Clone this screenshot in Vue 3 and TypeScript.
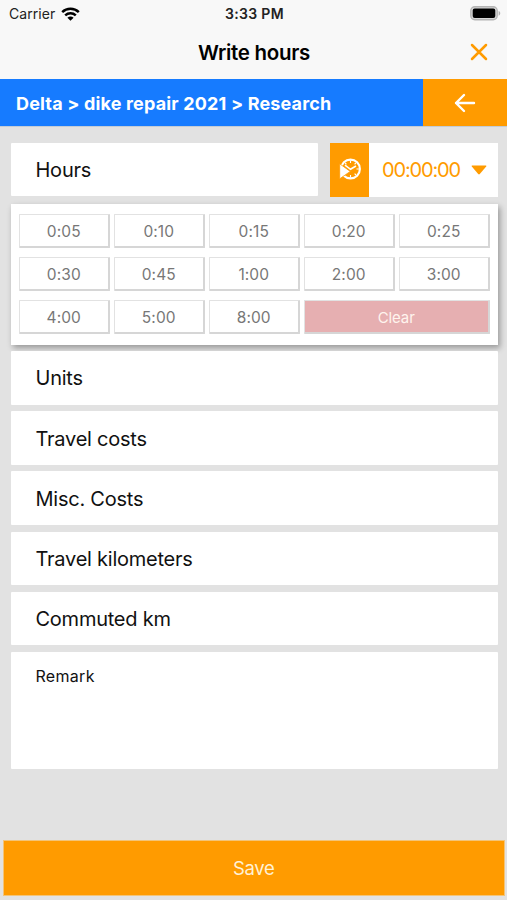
<script setup lang="ts">
import { ref } from 'vue'

const presets: string[] = [
  '0:05', '0:10', '0:15', '0:20', '0:25',
  '0:30', '0:45', '1:00', '2:00', '3:00',
  '4:00', '5:00', '8:00',
]
const sections: string[] = ['Units', 'Travel costs', 'Misc. Costs', 'Travel kilometers', 'Commuted km']
const time = ref('00:00:00')

function pick(value: string): void {
  time.value = `${value.padStart(5, '0')}:00`
}
function clear(): void {
  time.value = '00:00:00'
}
</script>

<template>
  <div class="screen">
    <header class="top">
      <div class="status">
        <div class="carrier">
          <span>Carrier</span>
          <svg class="wifi" viewBox="0 0 19 14" fill="none" stroke="#000" stroke-width="2.5">
            <path d="M1.2 5.1C5.8.7 13.2.7 17.8 5.1" />
            <path d="M4.2 8.3C7.2 5.5 11.8 5.5 14.8 8.3" />
            <path d="M9.5 13.8 6.4 10.7C8.1 9.2 10.9 9.2 12.6 10.7Z" fill="#000" stroke="none" />
          </svg>
        </div>
        <span class="clock">3:33 PM</span>
        <svg class="battery" viewBox="0 0 31 15">
          <rect x=".8" y=".8" width="26.4" height="13" rx="4" fill="#d8d8d8" stroke="#b4b4b4" stroke-width="1.4" />
          <rect x="2.7" y="2.5" width="22.6" height="9.6" rx="2" fill="#000" />
          <path d="M28.6 5c2.2.7 2.2 4 0 4.7Z" fill="#b0b0b0" />
        </svg>
      </div>
      <div class="title-row">
        <h1>Write hours</h1>
        <button class="close" aria-label="Close">
          <svg viewBox="0 0 18 18" fill="none" stroke="#ff9b00" stroke-width="2.5" stroke-linecap="round">
            <path d="M2 2 16 16M16 2 2 16" />
          </svg>
        </button>
      </div>
    </header>

    <nav class="crumbs">
      <span class="path">Delta &gt; dike repair 2021 &gt; Research</span>
      <button class="back" aria-label="Back">
        <svg viewBox="0 0 22 20" fill="none" stroke="#fff" stroke-width="2.4" stroke-linecap="round" stroke-linejoin="round">
          <path d="M20 10H2M10 2 2 10 10 18" />
        </svg>
      </button>
    </nav>

    <main class="body">
      <div class="hours">
        <div class="card hours-label">Hours</div>
        <div class="timer">
          <button class="start" aria-label="Start timer">
            <svg viewBox="0 0 24 24" fill="none" stroke="#fff">
              <circle cx="12.5" cy="11" r="9.4" stroke-width="2.1" />
              <path d="M12.5 2.5v2.6M12.5 17v2.4M4 11h2.5M18.5 11H21M7.2 4.8l1.2 1.5M17.8 4.8l-1.2 1.5M18 17l-1.4-1.4" stroke-width="1.1" />
              <path d="M7 7.2 12.5 11.3 18 8" stroke-width="1.6" />
              <path d="M1.7 5.8v15L12.3 13.4Z" fill="#fff" stroke="#ff9b00" stroke-width=".8" />
            </svg>
          </button>
          <span class="value">{{ time }}</span>
          <svg class="caret" viewBox="0 0 16 10"><path d="M1.2.5h13.6q1 0 .4.9L8.8 9.1q-.8.8-1.6 0L.8 1.4Q.2.5 1.2.5Z" fill="#ff9b00" /></svg>
        </div>
      </div>

      <div class="panel">
        <button v-for="p in presets" :key="p" class="preset" @click="pick(p)">{{ p }}</button>
        <button class="preset clear" @click="clear">Clear</button>
      </div>

      <div class="sections">
        <div v-for="s in sections" :key="s" class="card">{{ s }}</div>
        <div class="remark">Remark</div>
      </div>
    </main>

    <footer class="foot">
      <button class="save">Save</button>
    </footer>
  </div>
</template>

<style>
body {
  margin: 0;
  background: #e2e2e2;
}
</style>

<style scoped>
.screen {
  box-sizing: border-box;
  width: 507px;
  height: 900px;
  display: flex;
  flex-direction: column;
  overflow: hidden;
  background: #e2e2e2;
  color: #111;
  font-family: Inter, "Liberation Sans", sans-serif;
}
button {
  margin: 0;
  padding: 0;
  border: 0;
  background: none;
  font: inherit;
  color: inherit;
}
svg {
  display: block;
}
.top {
  height: 79px;
  flex: none;
  background: #f8f8f8;
}
.status {
  display: grid;
  grid-template-columns: 1fr auto 1fr;
  align-items: center;
  height: 27px;
  padding: 0 7px 0 9px;
  font-size: 14px;
  color: #222;
}
.carrier {
  display: flex;
  align-items: center;
  gap: 6px;
  letter-spacing: 0.05px;
}
.wifi {
  width: 19px;
  height: 14px;
}
.clock {
  font-weight: 600;
  font-size: 14px;
  letter-spacing: 0.3px;
}
.battery {
  width: 31px;
  height: 15px;
  justify-self: end;
  margin-right: -1px;
}
.title-row {
  display: grid;
  grid-template-columns: 1fr auto 1fr;
  align-items: center;
  height: 50px;
  padding: 0 19px 0 20px;
}
h1 {
  grid-column: 2;
  margin: 0;
  font-size: 20.5px;
  font-weight: 600;
  letter-spacing: -0.3px;
  color: #000;
}
.close {
  justify-self: end;
}
.close svg {
  width: 18px;
  height: 18px;
}
.crumbs {
  display: flex;
  flex: none;
  height: 48px;
  box-sizing: border-box;
  border-bottom: 1px solid #c3ccd6;
  background: #e2e2e2;
}
.path {
  flex: 1;
  display: flex;
  align-items: center;
  padding: 1px 0 0 16px;
  background: #167bff;
  color: #fff;
  font-size: 18px;
  font-weight: 650;
  letter-spacing: 0.16px;
  white-space: pre;
}
.back {
  width: 84.5px;
  display: flex;
  align-items: center;
  justify-content: center;
  background: #ff9b00;
}
.back svg {
  width: 22px;
  height: 20px;
}
.body {
  flex: 1;
  padding: 15.5px 9.5px 0 10.5px;
}
.hours {
  display: flex;
  gap: 12px;
  height: 54.5px;
}
.card {
  display: flex;
  align-items: center;
  box-sizing: border-box;
  height: 53.7px;
  padding: 1px 0 0 25px;
  background: #fff;
  border-radius: 1px;
  font-size: 20px;
  letter-spacing: -0.24px;
}
.hours-label {
  flex: 1;
  padding-top: 2px;
}
.timer {
  display: flex;
  align-items: center;
  width: 167.5px;
  background: #fff;
}
.start {
  width: 39px;
  height: 100%;
  display: flex;
  align-items: center;
  justify-content: center;
  background: #ff9b00;
}
.start svg {
  width: 24px;
  height: 24px;
}
.value {
  flex: 1;
  padding: 1px 0 0 13px;
  color: #ff9b00;
  font-size: 20px;
  letter-spacing: -1.15px;
}
.caret {
  width: 16px;
  height: 10px;
  margin-right: 10.5px;
}
.panel {
  position: relative;
  display: grid;
  grid-template-columns: repeat(5, 1fr);
  grid-auto-rows: 34px;
  gap: 9.2px 4.4px;
  height: 141px;
  box-sizing: border-box;
  margin-top: 7px;
  padding: 10px 8px 0 8.5px;
  background: #fff;
  box-shadow: 2px 3px 6px rgba(0, 0, 0, 0.33);
}
.preset {
  box-sizing: border-box;
  padding-top: 2px;
  border: 1px solid #e2e2e2;
  border-right: 2px solid #d6d6d6;
  border-bottom: 2px solid #d6d6d6;
  border-radius: 1px;
  background: #fff;
  color: #777;
  font-size: 15.5px;
  letter-spacing: 0.1px;
}
.clear {
  grid-column: span 2;
  background: #e6afb1;
  color: #fff4ee;
  font-size: 15px;
  letter-spacing: -0.1px;
}
.sections {
  position: relative;
  display: grid;
  gap: 6.5px;
  margin-top: 6px;
}
.remark {
  box-sizing: border-box;
  height: 117.5px;
  padding: 14px 25px;
  background: #fff;
  border-radius: 1px;
  font-size: 16px;
  line-height: 20px;
  letter-spacing: 0.3px;
}
.foot {
  display: flex;
  flex: none;
  height: 60px;
  padding: 0 2.5px 0 3px;
}
.save {
  flex: 1;
  box-sizing: border-box;
  height: 55.5px;
  border: 1px solid #f3c478;
  background: #ff9b00;
  color: #fff1d5;
  font-size: 18.5px;
  letter-spacing: -0.3px;
}
</style>
